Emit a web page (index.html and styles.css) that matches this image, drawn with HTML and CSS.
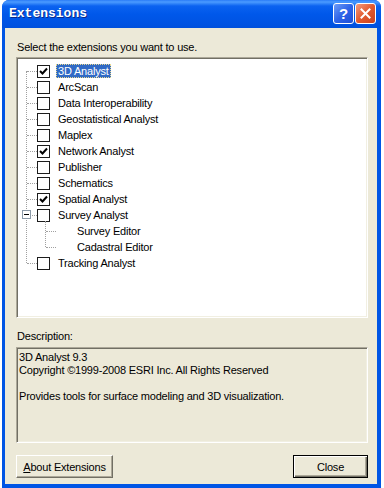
FILE: index.html
```html
<!DOCTYPE html>
<html lang="en">
<head>
    <title>Extensions</title>
    <link rel="stylesheet" href="styles.css">
</head>
<body>
    <div class="window">
        <div class="titlebar">
            <span class="title">Extensions</span>
            <div class="cap-btns">
                <span class="cap-btn help">?</span>
                <span class="cap-btn close">
                    <svg width="13" height="13" viewBox="0 0 13 13"><path d="M2.5 2.5 L10.5 10.5 M10.5 2.5 L2.5 10.5" stroke="#fff" stroke-width="2" stroke-linecap="square"/></svg>
                </span>
            </div>
        </div>
        <div class="client">
            <p class="prompt">Select the extensions you want to use.</p>
            <div class="listbox">
                <ul class="tree">
                    <li class="node"><div class="row"><span class="twig"></span><span class="check on"><svg width="9" height="9" viewBox="0 0 9 9"><path d="M1 4 L3.5 6.5 L8 1.5" fill="none" stroke="#000" stroke-width="2"/></svg></span><span class="label selected">3D Analyst</span></div></li>
                    <li class="node"><div class="row"><span class="twig"></span><span class="check"></span><span class="label">ArcScan</span></div></li>
                    <li class="node"><div class="row"><span class="twig"></span><span class="check"></span><span class="label">Data Interoperability</span></div></li>
                    <li class="node"><div class="row"><span class="twig"></span><span class="check"></span><span class="label">Geostatistical Analyst</span></div></li>
                    <li class="node"><div class="row"><span class="twig"></span><span class="check"></span><span class="label">Maplex</span></div></li>
                    <li class="node"><div class="row"><span class="twig"></span><span class="check on"><svg width="9" height="9" viewBox="0 0 9 9"><path d="M1 4 L3.5 6.5 L8 1.5" fill="none" stroke="#000" stroke-width="2"/></svg></span><span class="label">Network Analyst</span></div></li>
                    <li class="node"><div class="row"><span class="twig"></span><span class="check"></span><span class="label">Publisher</span></div></li>
                    <li class="node"><div class="row"><span class="twig"></span><span class="check"></span><span class="label">Schematics</span></div></li>
                    <li class="node"><div class="row"><span class="twig"></span><span class="check on"><svg width="9" height="9" viewBox="0 0 9 9"><path d="M1 4 L3.5 6.5 L8 1.5" fill="none" stroke="#000" stroke-width="2"/></svg></span><span class="label">Spatial Analyst</span></div></li>
                    <li class="node">
                        <div class="row"><span class="expander"></span><span class="twig"></span><span class="check"></span><span class="label">Survey Analyst</span></div>
                        <ul class="sub">
                            <li class="node"><div class="row"><span class="twig"></span><span class="blank"></span><span class="label">Survey Editor</span></div></li>
                            <li class="node"><div class="row"><span class="twig"></span><span class="blank"></span><span class="label">Cadastral Editor</span></div></li>
                        </ul>
                    </li>
                    <li class="node"><div class="row"><span class="twig"></span><span class="check"></span><span class="label">Tracking Analyst</span></div></li>
                </ul>
            </div>
            <p class="caption">Description:</p>
            <div class="desc">
                <div class="line">3D Analyst 9.3</div>
                <div class="line">Copyright &copy;1999-2008 ESRI Inc. All Rights Reserved</div>
                <div class="line"></div>
                <div class="line">Provides tools for surface modeling and 3D visualization.</div>
            </div>
            <div class="buttons">
                <button class="btn about"><u>A</u>bout Extensions</button>
                <button class="btn close-btn">Close</button>
            </div>
        </div>
    </div>
</body>
</html>
```

FILE: styles.css
```css
body {
    margin: 0;
    background-color: white;
    font-family: "Liberation Sans", Arial, sans-serif;
    font-size: 11px;
    letter-spacing: -0.2px;
}

.window {
    margin-left: 2px;
    width: 379px;
    height: 488px;
    display: flex;
    flex-direction: column;
    background-color: #0055e5;
    border-radius: 7px 7px 0 0;
}

.titlebar {
    height: 28px;
    display: flex;
    justify-content: space-between;
    padding: 0 5px 0 7px;
    border-radius: 7px 7px 0 0;
    background: linear-gradient(to bottom, #2a7cf7 0, #4b9bff 2px, #0b62f0 6px, #0058ea 14px, #0053e2 24px, #0050dc 28px);
}

.title {
    padding-top: 6px;
    font-family: "Liberation Mono", "Courier New", monospace;
    font-weight: bold;
    font-size: 13px;
    letter-spacing: 0;
    color: white;
    text-shadow: 1px 1px 0 #0a2a8a;
}

.cap-btns {
    display: flex;
    gap: 1px;
    padding-top: 3px;
}

.cap-btn {
    width: 19px;
    height: 19px;
    border: 1px solid white;
    border-radius: 3px;
    display: flex;
    align-items: center;
    justify-content: center;
}

.help {
    background: linear-gradient(135deg, #6d9cf8 0, #2f64e8 50%, #1e4fd6 100%);
    color: white;
    font-family: "Liberation Sans", Arial, sans-serif;
    font-weight: bold;
    font-size: 15px;
}

.close {
    background: linear-gradient(135deg, #f39b80 0, #e25a2f 50%, #c9421f 100%);
}

.client {
    flex: 1;
    margin: 0 4px 4px 3px;
    padding: 0 9px 0 11px;
    background-color: #ece9d8;
}

.prompt {
    margin: 0;
    padding: 13px 0 0 1px;
    line-height: 13px;
}

.listbox {
    margin-top: 3px;
    height: 261px;
    box-sizing: border-box;
    padding: 1px;
    background-color: white;
    border: 1px solid;
    border-color: #aca899 white white #aca899;
    box-shadow: inset 1px 1px 0 #716f64, inset -1px -1px 0 #f1efe2;
}

.tree,
.sub {
    list-style: none;
    margin: 0;
    padding: 0;
    position: relative;
}

.tree {
    padding-top: 4px;
}

/* trunk line from first to last root item */
.tree::before {
    content: "";
    position: absolute;
    left: 8px;
    top: 12px;
    bottom: 8px;
    border-left: 1px dotted #a0a0a0;
}

.sub::before {
    content: "";
    position: absolute;
    left: 27px;
    top: -2px;
    bottom: 8px;
    border-left: 1px dotted #a0a0a0;
}

.row {
    position: relative;
    height: 16px;
    display: flex;
    align-items: center;
    padding-left: 9px;
}

.sub .row {
    padding-left: 28px;
}

.twig {
    width: 10px;
    border-top: 1px dotted #a0a0a0;
}

.check {
    width: 11px;
    height: 11px;
    border: 1px solid #1c1c1c;
    background-color: white;
    display: flex;
    align-items: center;
    justify-content: center;
}

.blank {
    width: 13px;
}

.label {
    margin-left: 6px;
    padding: 0 2px;
    line-height: 14px;
    color: black;
    white-space: nowrap;
}

.label.selected {
    background-color: #316ac5;
    color: white;
    outline: 1px dotted #e8d890;
    outline-offset: -1px;
}

.expander {
    position: absolute;
    left: 4px;
    top: 3px;
    width: 7px;
    height: 7px;
    border: 1px solid #8c9aa8;
    background-color: white;
    z-index: 1;
}

.expander::after {
    content: "";
    position: absolute;
    left: 1px;
    top: 3px;
    width: 5px;
    height: 1px;
    background-color: black;
}

.caption {
    margin: 12px 0 0 1px;
    line-height: 13px;
}

.desc {
    margin-top: 4px;
    height: 96px;
    box-sizing: border-box;
    padding: 3px 2px;
    border: 1px solid;
    border-color: #aca899 white white #aca899;
    box-shadow: inset 1px 1px 0 #716f64, inset -1px -1px 0 #f1efe2;
}

.line {
    height: 13px;
    line-height: 13px;
    white-space: nowrap;
}

.buttons {
    margin-top: 12px;
    display: flex;
    justify-content: space-between;
}

.btn {
    height: 23px;
    padding: 0;
    font-family: "Liberation Sans", Arial, sans-serif;
    font-size: 11px;
    letter-spacing: -0.2px;
    color: black;
    background-color: #ece9d8;
    border: 1px solid;
    border-color: white #716f64 #716f64 white;
    box-shadow: inset -1px -1px 0 #aca899;
}

.about {
    width: 97px;
}

.close-btn {
    width: 75px;
    border-color: black;
    box-shadow: inset 1px 1px 0 white, inset -1px -1px 0 #716f64, inset -2px -2px 0 #aca899;
}
```
